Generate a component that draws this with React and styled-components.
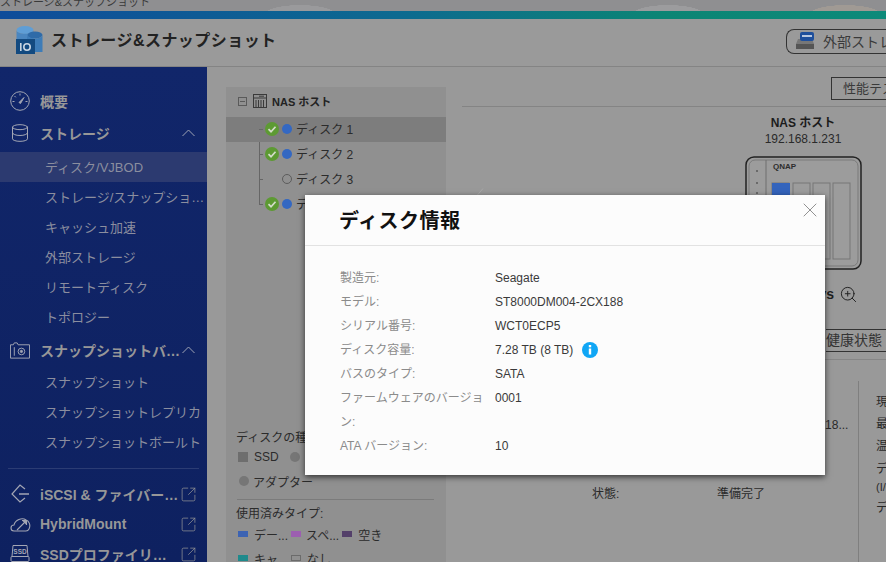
import React from 'react';
import styled, { createGlobalStyle } from 'styled-components';
import { Database, SquareArrowOutUpRight, X, ZoomIn } from 'lucide-react';

const GlobalStyle = createGlobalStyle`
  html, body {
    margin: 0;
    padding: 0;
    background: #999;
  }
  body {
    font-family: "Liberation Sans", "Noto Sans CJK JP", sans-serif;
  }
`;

const Page = styled.div`
  position: relative;
  width: 886px;
  height: 562px;
  overflow: hidden;
  display: flex;
  flex-direction: column;
  background: #999;
`;

const TitleStrip = styled.div`
  height: 11px;
  overflow: hidden;
  background:
    radial-gradient(ellipse 35px 9px at 668px 14px, #9c9c9e 98%, transparent),
    radial-gradient(ellipse 35px 9px at 845px 14px, #a09a94 98%, transparent),
    radial-gradient(ellipse 35px 9px at 300px 14px, #9a9a9c 98%, transparent),
    #8f8f91;
  color: #3a3a3a;
  font-size: 11px;
  line-height: 5px;
  white-space: nowrap;
`;

const ColorBar = styled.div`
  height: 8px;
  background: linear-gradient(90deg, #0f4c9a 0%, #0d6a90 45%, #0c8574 75%, #0d8a7a 100%);
`;

const Header = styled.header`
  height: 48px;
  box-sizing: border-box;
  border-bottom: 1px solid #848484;
  display: flex;
  align-items: center;
  padding: 0 0 7px 15px;
  background: #9a9a9a;
`;

const AppTitle = styled.h1`
  margin: 0 0 0 7px;
  font-size: 16px;
  letter-spacing: 0.45px;
  font-weight: 700;
  color: #222;
`;

const ExternalButton = styled.div`
  margin-left: auto;
  width: 100px;
  height: 25px;
  box-sizing: border-box;
  border: 1px solid #333;
  border-right: none;
  border-radius: 8px 0 0 8px;
  display: flex;
  align-items: center;
  gap: 8px;
  padding-left: 8px;
  font-size: 14px;
  color: #3a3a3a;
  white-space: nowrap;
  overflow: hidden;
  position: relative;
  top: 2px;
  svg {
    flex: none;
  }
`;

const Body = styled.div`
  flex: 1;
  display: flex;
  min-height: 0;
`;

const Sidebar = styled.nav`
  width: 207px;
  flex: none;
  box-sizing: border-box;
  padding-top: 18px;
  background: linear-gradient(180deg, #11266a 0%, #0e2160 100%);
  overflow: hidden;
`;

const GroupRow = styled.div`
  height: 32px;
  margin-top: ${(p) => p.$gap || 0}px;
  display: flex;
  align-items: center;
  padding: 0 12px 0 10px;
  color: #979798;
  font-size: 14px;
  font-weight: 700;
  white-space: nowrap;
`;

const GroupIcon = styled.span`
  width: 20px;
  height: 20px;
  flex: none;
  margin-right: 10px;
  display: flex;
  align-items: center;
  justify-content: center;
  color: #a3a6b4;
`;

const GroupLabel = styled.span`
  flex: 1;
  min-width: 0;
  overflow: hidden;
  text-overflow: ellipsis;
`;

const SubList = styled.div`
  margin-top: ${(p) => p.$gap || 0}px;
`;

const SubRow = styled.div`
  height: 30px;
  box-sizing: border-box;
  padding: 0 2px 1px 45px;
  display: flex;
  align-items: center;
  font-size: 13px;
  white-space: nowrap;
  color: #8b8e9f;
  background: ${(p) => (p.$active ? '#2c3a70' : 'transparent')};
`;

const SubText = styled.span`
  min-width: 0;
  overflow: hidden;
  text-overflow: ellipsis;
`;

const SideDivider = styled.div`
  height: 1px;
  margin: 11px 8px 10px;
  background: #2b3c74;
`;

const LinkRow = styled(GroupRow)`
  height: 30px;
  padding-right: 10px;
  svg {
    flex: none;
  }
`;

const Content = styled.main`
  flex: 1;
  min-width: 0;
  display: flex;
  gap: 16px;
  padding: 20px 0 0 19px;
  overflow: hidden;
`;

const TreePanel = styled.section`
  width: 220px;
  flex: none;
  background: #909090;
  font-size: 12px;
  color: #2b2b2b;
`;

const TreeHead = styled.div`
  height: 30px;
  box-sizing: border-box;
  padding: 0 0 2px 12px;
  display: flex;
  align-items: center;
  gap: 5px;
  font-size: 11px;
  font-weight: 700;
  color: #222;
`;

const Expander = styled.span`
  width: 7px;
  height: 7px;
  border: 1px solid #5a5a5a;
  position: relative;
  margin-right: 1px;
  &::after {
    content: '';
    position: absolute;
    left: 1px;
    right: 1px;
    top: 3px;
    height: 1px;
    background: #5a5a5a;
  }
`;

const TreeList = styled.div`
  position: relative;
  &::before {
    content: '';
    position: absolute;
    left: 33px;
    top: 0;
    height: 88px;
    width: 1px;
    background: #666;
  }
`;

const TreeRow = styled.div`
  position: relative;
  height: 25px;
  box-sizing: border-box;
  padding: 0 0 2px 39px;
  display: flex;
  align-items: center;
  background: ${(p) => (p.$selected ? '#7d7d7d' : 'transparent')};
  &::before {
    content: '';
    position: absolute;
    left: 33px;
    top: 12px;
    width: 4px;
    height: 1px;
    background: #666;
  }
`;

const CheckSlot = styled.span`
  width: 14px;
  height: 14px;
  flex: none;
  display: flex;
`;

const StatusDot = styled.span`
  width: 10px;
  height: 10px;
  flex: none;
  box-sizing: border-box;
  margin: 0 4px 0 3px;
  border-radius: 50%;
  background: ${(p) => (p.$empty ? 'transparent' : '#3468c2')};
  border: ${(p) => (p.$empty ? '1px solid #5c5c5c' : 'none')};
`;

const Legend = styled.div`
  margin-top: 212px;
  padding: 0 12px 0 10px;
`;

const LegendTitle = styled.div`
  height: 18px;
  line-height: 18px;
  white-space: nowrap;
`;

const LegendRow = styled.div`
  height: ${(p) => p.$h || 24}px;
  display: flex;
  align-items: center;
  white-space: nowrap;
`;

const Swatch = styled.span`
  width: 10px;
  height: ${(p) => p.$h || 10}px;
  flex: none;
  margin: 0 ${(p) => p.$right ?? 6}px 0 ${(p) => p.$left || 2}px;
  box-sizing: border-box;
  border-radius: ${(p) => (p.$round ? '50%' : '0')};
  background: ${(p) => p.$color || 'transparent'};
  border: ${(p) => (p.$outline ? '1px solid #6b6b6b' : 'none')};
`;

const LegendDivider = styled.div`
  height: 1px;
  margin: 4px 0 5px 1px;
  background: #7b7b7b;
`;

const RightPane = styled.section`
  flex: 1;
  min-width: 0;
  margin-top: -20px;
  font-size: 12px;
  color: #2a2a2a;
  display: flex;
  flex-direction: column;
`;

const PaneToolbar = styled.div`
  height: 41px;
  box-sizing: border-box;
  border-bottom: 1px solid #848484;
  display: flex;
  justify-content: flex-end;
  align-items: flex-start;
  padding-top: 10px;
`;

const ToolButton = styled.div`
  width: 55px;
  height: 23px;
  box-sizing: border-box;
  border: 1px solid #333;
  border-right: none;
  padding-left: 11px;
  line-height: 21px;
  font-size: 13px;
  color: #3a3a3a;
  white-space: nowrap;
  overflow: hidden;
`;

const NasColumn = styled.div`
  align-self: flex-end;
  width: 166px;
  padding-top: 8px;
  display: flex;
  flex-direction: column;
  align-items: center;
`;

const NasName = styled.div`
  font-weight: 700;
  line-height: 16px;
  color: #1c1c1c;
`;

const NasAddress = styled.div`
  line-height: 16px;
  margin-bottom: 9px;
`;

const ZoomRow = styled.div`
  align-self: flex-end;
  height: 20px;
  margin: 13px 28px 0 0;
  display: flex;
  align-items: center;
  gap: 5px;
  font-size: 14px;
  font-weight: 700;
  white-space: nowrap;
  color: #1f1f1f;
`;

const TabRow = styled.div`
  height: 31px;
  margin-top: 25px;
  border-bottom: 1px solid #868686;
  display: flex;
  justify-content: flex-end;
`;

const Tab = styled.div`
  width: 60px;
  height: 23px;
  box-sizing: border-box;
  border-top: 1px solid #333;
  border-bottom: 1px solid #333;
  font-size: 14px;
  line-height: 21px;
  color: #333;
  white-space: nowrap;
`;

const InfoRow = styled.div`
  display: flex;
  margin-top: 21px;
  padding-left: 130px;
`;

const InfoTable = styled.div`
  width: 266px;
  flex: none;
  padding-top: 10px;
`;

const InfoLine = styled.div`
  height: 22.5px;
  display: grid;
  grid-template-columns: 125px 135px;
  align-items: center;
  white-space: nowrap;
`;

const StatColumn = styled.div`
  height: 171px;
  flex: none;
  width: 40px;
  padding: 10px 0 0 17px;
  border-left: 1px solid #7f7f7f;
  white-space: nowrap;
`;

const StatLine = styled.div`
  height: ${(p) => p.$h || 22}px;
  line-height: ${(p) => p.$h || 22}px;
  font-size: ${(p) => p.$size || 12}px;
`;

const ConnectorTick = styled.svg`
  position: absolute;
  left: 476px;
  top: 188px;
`;

const Modal = styled.div`
  position: absolute;
  left: 305px;
  top: 195px;
  width: 520px;
  height: 280px;
  background: #fcfcfc;
  box-shadow: 0 2px 6px rgba(0, 0, 0, 0.65);
`;

const ModalHeader = styled.div`
  height: 51px;
  box-sizing: border-box;
  border-bottom: 1px solid #e2e2e2;
  padding: 13px 0 0 34px;
  position: relative;
`;

const ModalTitle = styled.h2`
  margin: 0;
  font-size: 20px;
  letter-spacing: 0.5px;
  line-height: 26px;
  font-weight: 700;
  color: #111;
`;

const CloseButton = styled.span`
  position: absolute;
  top: 3px;
  right: 3px;
  display: flex;
  color: #858585;
`;

const ModalBody = styled.dl`
  margin: 0;
  padding: 20px 0 0 35px;
  display: grid;
  grid-template-columns: 155px 1fr;
  grid-auto-rows: 24px;
  font-size: 12px;
  line-height: 24px;
`;

const FieldLabel = styled.dt`
  color: #8b8b8b;
  word-break: break-all;
  &.wrap {
    grid-row: span 2;
    width: 152px;
  }
`;

const FieldValue = styled.dd`
  margin: 0;
  color: #3a3a3a;
  display: flex;
  align-items: center;
  gap: 9px;
  &.wrap {
    grid-row: span 2;
    align-items: flex-start;
  }
`;

const AppIcon = () => (
  <svg width="29" height="29" viewBox="0 0 29 29">
    <ellipse cx="10" cy="5" rx="8.5" ry="4" fill="#5f9ed6" />
    <path d="M1.5 5v10h17V5c0 5-17 5-17 0z" fill="#4a86c0" />
    <ellipse cx="20" cy="10" rx="7.5" ry="3.5" fill="#2f6ba8" />
    <path d="M12 10v17h15.500V10c0 4.500-15.500 4.500-15.500 0z" fill="#3d7cb8" />
    <rect x="1" y="14" width="19" height="15" fill="#134a80" />
    <rect x="5" y="18" width="1.600" height="8" fill="#c9d6e2" />
    <circle cx="12" cy="22" r="3.200" fill="none" stroke="#c9d6e2" strokeWidth="1.600" />
  </svg>
);

const DiskIcon = () => (
  <svg width="20" height="20" viewBox="0 0 20 20">
    <path d="M3 8h14l2 5v5H1v-5z" fill="#777" />
    <rect x="1" y="13" width="18" height="5" fill="#555" />
    <rect x="5" y="1" width="14" height="9" rx="2" fill="#1e4f9c" />
    <rect x="7" y="4" width="10" height="2" fill="#b9c8e0" />
  </svg>
);

const CheckIcon = () => (
  <svg width="14" height="14" viewBox="0 0 14 14">
    <circle cx="7" cy="7" r="7" fill="#5d9a33" />
    <path d="M3.500 7.200l2.500 2.500 4.500-5" fill="none" stroke="#d5dccb" strokeWidth="1.700" />
  </svg>
);

const HostIcon = () => (
  <svg width="14" height="14" viewBox="0 0 14 14" fill="none" stroke="#3a3a3a" strokeWidth="1">
    <rect x="0.500" y="0.500" width="13" height="13" />
    <path d="M0.500 4h13M3 6v7.500M5.500 6v7.500M8 6v7.500M10.500 6v7.500M6 2.200h5" />
  </svg>
);

const GaugeIcon = () => (
  <svg width="20" height="20" viewBox="0 0 20 20" fill="none" stroke="#a3a6b4" strokeWidth="1">
    <circle cx="10" cy="10" r="9.300" />
    <path d="M10 2.500v2M4.500 5l1.300 1.300M2.500 10.500h2M17.500 10.500h-2" />
    <path d="M9 11.500l5-5-3.500 6z" fill="#a3a6b4" />
  </svg>
);

const Caret = () => (
  <svg width="13" height="8" viewBox="0 0 13 8" fill="none" stroke="#9ea3b4" strokeWidth="1">
    <path d="M0.500 7l6-6 6 6" />
  </svg>
);

const SnapshotIcon = () => (
  <svg width="21" height="17" viewBox="0 0 21 17" fill="none" stroke="#a3a6b4" strokeWidth="1">
    <path d="M0.500 2.500h3l1-2h3l1 2h12v14h-20z" />
    <path d="M4.500 5v9" />
    <circle cx="12" cy="9.500" r="3.500" />
    <circle cx="12" cy="9.500" r="1.200" fill="#a3a6b4" />
  </svg>
);

const IscsiIcon = () => (
  <svg width="20" height="20" viewBox="0 0 20 20" fill="none" stroke="#a3a6b4" strokeWidth="1.200">
    <path d="M15 5l-5-4-8 9 8 8 5-4" />
    <path d="M9 10h10" strokeWidth="1.500" />
  </svg>
);

const CloudIcon = () => (
  <svg width="21" height="16" viewBox="0 0 21 16" fill="none" stroke="#a3a6b4" strokeWidth="1.100">
    <path d="M4 15c-4 0-4-6 0-6 1-5 8-8 12-5 3 1 5 5 3 9-1 2-2 2-3 2z" />
    <path d="M7 14l9-9" />
    <path d="M12 4.500h4.500V9" fill="#a3a6b4" />
  </svg>
);

const SsdIcon = () => (
  <svg width="20" height="20" viewBox="0 0 20 20" fill="none" stroke="#a3a6b4" strokeWidth="1">
    <path d="M3 1.500h14l1 11H2z" />
    <rect x="1" y="12.500" width="18" height="5" rx="1" />
    <text x="10" y="9.500" fontSize="6.500" textAnchor="middle" fill="#a3a6b4" stroke="none" fontFamily="Liberation Sans">SSD</text>
  </svg>
);

const NasIcon = () => (
  <svg width="117" height="115" viewBox="0 0 117 115" fill="none">
    <rect x="1" y="1" width="115" height="112" rx="8" fill="#9c9c9c" stroke="#222" strokeWidth="1.500" />
    <rect x="4" y="4" width="109" height="106" rx="6" stroke="#7a7a7a" />
    <path d="M21 4v106" stroke="#6f6f6f" />
    {[10, 22, 32, 42, 52, 62].map((y) => (
      <rect key={y} x="11" y={y + 4} width="2" height="2" fill="#6a6a6a" />
    ))}
    <text x="28" y="13" fontSize="8" fontWeight="700" fill="#2d2d2d" fontFamily="Liberation Sans">QNAP</text>
    <rect x="27" y="27" width="17" height="76" fill="#9a9a9a" stroke="#767676" />
    <rect x="27" y="27" width="18" height="18" fill="#3464bc" />
    <rect x="48" y="27" width="17" height="76" stroke="#767676" />
    <rect x="68" y="27" width="17" height="76" stroke="#767676" />
    <rect x="88" y="27" width="17" height="76" stroke="#767676" />
  </svg>
);

const InfoIcon = () => (
  <svg width="16" height="16" viewBox="0 0 16 16">
    <circle cx="8" cy="8" r="8" fill="#10a6f5" />
    <rect x="6.800" y="6.500" width="2.400" height="6" fill="#fff" />
    <rect x="6.800" y="3" width="2.400" height="2.300" fill="#fff" />
  </svg>
);

const storageItems = ['ディスク/VJBOD', 'ストレージ/スナップショット', 'キャッシュ加速', '外部ストレージ', 'リモートディスク', 'トポロジー'];
const snapshotItems = ['スナップショット', 'スナップショットレプリカ', 'スナップショットボールト'];
const linkItems = [
  { label: 'iSCSI & ファイバーチャネル', icon: <IscsiIcon /> },
  { label: 'HybridMount', icon: <CloudIcon /> },
  { label: 'SSDプロファイリングツール', icon: <SsdIcon /> },
];
const disks = [
  { name: 'ディスク 1', ok: true, selected: true },
  { name: 'ディスク 2', ok: true },
  { name: 'ディスク 3', ok: false },
  { name: 'ディスク 4', ok: true },
];
const diskFields = [
  ['製造元:', 'Seagate'],
  ['モデル:', 'ST8000DM004-2CX188'],
  ['シリアル番号:', 'WCT0ECP5'],
  ['ディスク容量:', '7.28 TB (8 TB)', true],
  ['バスのタイプ:', 'SATA'],
  ['ファームウェアのバージョン:', '0001'],
  ['ATA バージョン:', '10'],
];

const App = () => {
  return (
    <Page>
      <GlobalStyle />
      <TitleStrip>ストレージ&スナップショット</TitleStrip>
      <ColorBar />
      <Header>
        <AppIcon />
        <AppTitle>ストレージ&スナップショット</AppTitle>
        <ExternalButton>
          <DiskIcon />
          外部ストレージ
        </ExternalButton>
      </Header>
      <Body>
        <Sidebar>
          <GroupRow>
            <GroupIcon><GaugeIcon /></GroupIcon>
            <GroupLabel>概要</GroupLabel>
          </GroupRow>
          <GroupRow>
            <GroupIcon><Database size={20} strokeWidth={1.2} /></GroupIcon>
            <GroupLabel>ストレージ</GroupLabel>
            <Caret />
          </GroupRow>
          <SubList $gap={3}>
            {storageItems.map((item, i) => (
              <SubRow key={item} $active={i === 0}><SubText>{item}</SubText></SubRow>
            ))}
          </SubList>
          <GroupRow $gap={2}>
            <GroupIcon><SnapshotIcon /></GroupIcon>
            <GroupLabel>スナップショットバックアップ</GroupLabel>
            <Caret />
          </GroupRow>
          <SubList $gap={1}>
            {snapshotItems.map((item) => (
              <SubRow key={item}><SubText>{item}</SubText></SubRow>
            ))}
          </SubList>
          <SideDivider />
          {linkItems.map((item) => (
            <LinkRow key={item.label}>
              <GroupIcon>{item.icon}</GroupIcon>
              <GroupLabel>{item.label}</GroupLabel>
              <SquareArrowOutUpRight size={17} strokeWidth={1} />
            </LinkRow>
          ))}
        </Sidebar>
        <Content>
          <TreePanel>
            <TreeHead>
              <Expander />
              <HostIcon />
              NAS ホスト
            </TreeHead>
            <TreeList>
              {disks.map((disk) => (
                <TreeRow key={disk.name} $selected={disk.selected}>
                  <CheckSlot>{disk.ok && <CheckIcon />}</CheckSlot>
                  <StatusDot $empty={!disk.ok} />
                  {disk.name}
                </TreeRow>
              ))}
            </TreeList>
            <Legend>
              <LegendTitle>ディスクの種類:</LegendTitle>
              <LegendRow $h={20}>
                <Swatch $color="#6e6e6e" />
                SSD
                <Swatch $color="#767676" $round $left={11} />
              </LegendRow>
              <LegendRow $h={28}>
                <Swatch $color="#767676" $round $left={3} $right={4} />
                アダプター
              </LegendRow>
              <LegendDivider />
              <LegendTitle>使用済みタイプ:</LegendTitle>
              <LegendRow $h={22}>
                <Swatch $color="#3c63b3" $h={6} />
                デー...
                <Swatch $color="#9c5fb0" $h={6} $left={3} $right={5} />
                スペ...
                <Swatch $color="#54406a" $h={6} $left={3} />
                空き
              </LegendRow>
              <LegendRow $h={26}>
                <Swatch $color="#1f8a8c" $h={6} />
                キャ...
                <Swatch $outline $h={6} $left={3} />
                なし
              </LegendRow>
            </Legend>
          </TreePanel>
          <RightPane>
            <PaneToolbar>
              <ToolButton>性能テスト</ToolButton>
            </PaneToolbar>
            <NasColumn>
              <NasName>NAS ホスト</NasName>
              <NasAddress>192.168.1.231</NasAddress>
              <NasIcon />
              <ZoomRow>4 Bays<ZoomIn size={19} strokeWidth={1.2} /></ZoomRow>
            </NasColumn>
            <TabRow>
              <Tab>健康状態</Tab>
            </TabRow>
            <InfoRow>
              <InfoTable>
                <InfoLine><span>ディスク:</span><span>ディスク 1</span></InfoLine>
                <InfoLine><span>モデル:</span><span>ST8000DM004-2CX18...</span></InfoLine>
                <InfoLine><span>容量:</span><span>7.28 TB</span></InfoLine>
                <InfoLine><span>バス:</span><span>SATA</span></InfoLine>
                <InfoLine><span>状態:</span><span>準備完了</span></InfoLine>
              </InfoTable>
              <StatColumn>
                <StatLine>現在の速度:</StatLine>
                <StatLine>最大速度:</StatLine>
                <StatLine>温度:</StatLine>
                <StatLine $h={24}>ディスクアクセス</StatLine>
                <StatLine $h={12} $size={11}>(I/O):</StatLine>
                <StatLine $h={30}>ディスクの健康:</StatLine>
              </StatColumn>
            </InfoRow>
          </RightPane>
        </Content>
      </Body>
      <ConnectorTick width="8" height="8" viewBox="0 0 8 8" fill="none" stroke="#a8a8a8">
        <path d="M7 0.500L1 7.500" />
      </ConnectorTick>
      <Modal>
        <ModalHeader>
          <ModalTitle>ディスク情報</ModalTitle>
          <CloseButton><X size={24} strokeWidth={0.9} /></CloseButton>
        </ModalHeader>
        <ModalBody>
          {diskFields.map(([label, value, info]) => {
            const wrap = label.length > 10 ? 'wrap' : undefined;
            return (
              <React.Fragment key={label}>
                <FieldLabel className={wrap}>{label}</FieldLabel>
                <FieldValue className={wrap}>
                  {value}
                  {info && <InfoIcon />}
                </FieldValue>
              </React.Fragment>
            );
          })}
        </ModalBody>
      </Modal>
    </Page>
  );
};

export default App;
